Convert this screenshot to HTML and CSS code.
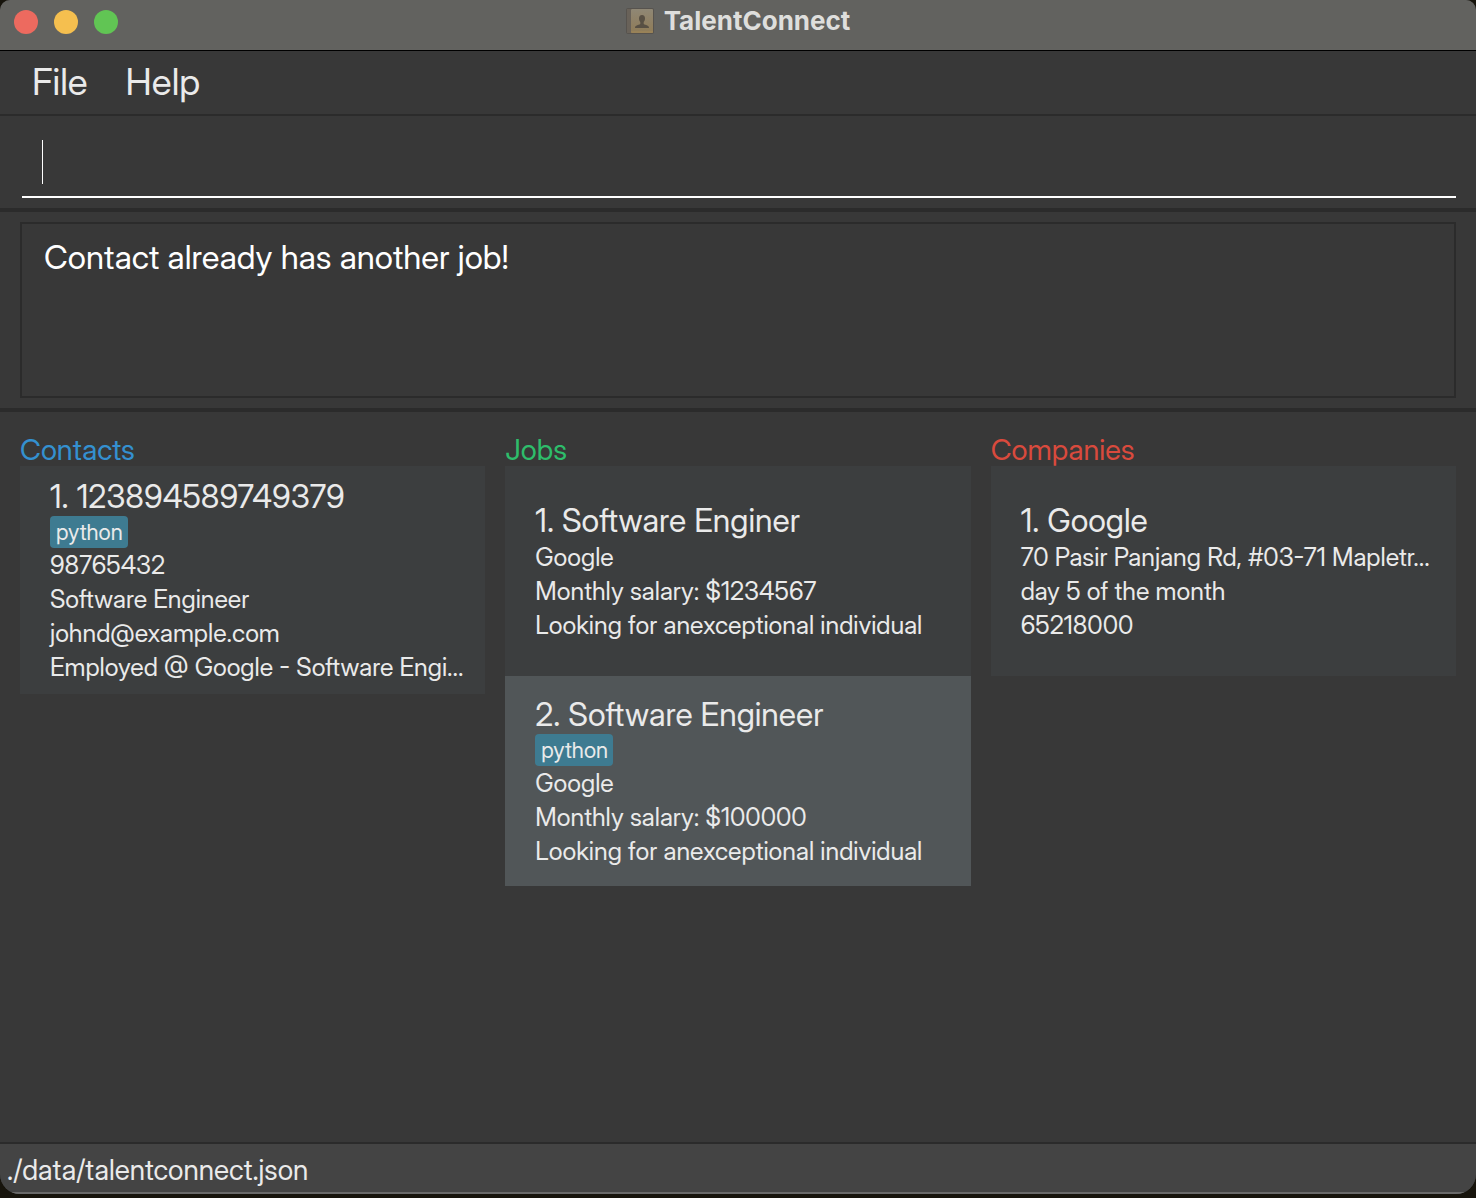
FILE: index.html
```
<!DOCTYPE html>
<html lang="en">
<head>
<meta charset="utf-8">
<title>TalentConnect</title>
<link rel="stylesheet" href="styles.css">
</head>
<body>
<div class="window">
  <header class="titlebar">
    <div class="lights">
      <button class="light close" aria-label="Close"></button>
      <button class="light minimize" aria-label="Minimize"></button>
      <button class="light maximize" aria-label="Maximize"></button>
    </div>
    <h1 class="app-name">
      <svg class="app-icon" viewBox="0 0 28 28" aria-hidden="true">
        <defs>
          <linearGradient id="cover" x1="0" y1="0" x2="0" y2="1">
            <stop offset="0" stop-color="#8f8775"/>
            <stop offset="1" stop-color="#907c57"/>
          </linearGradient>
        </defs>
        <rect x="0" y="1" width="28" height="26" rx="2" fill="#57534e"/>
        <rect x="1" y="2" width="4" height="24" fill="#696259"/>
        <rect x="5" y="2" width="22" height="24" rx="1" fill="url(#cover)"/>
        <path d="M5 25h22" stroke="#a18859" stroke-width="1"/>
        <path d="M16 8c-2 0-3 1.500-3 3.500 0 1.500.5 2.500 1.300 3.500v2c-2 1.200-5.300 1.200-5.300 4h14c0-2.800-3.300-2.800-5.300-4v-2c.8-1 1.300-2 1.300-3.500C19 9.500 18 8 16 8z" fill="#585044"/>
      </svg>
      <span>TalentConnect</span>
    </h1>
  </header>
  <nav class="menubar">
    <button class="menu">File</button>
    <button class="menu">Help</button>
  </nav>
  <form class="command">
    <input class="command-input" type="text" aria-label="Command">
  </form>
  <section class="result">
    <output class="result-text">Contact already has another job!</output>
  </section>
  <main class="lists">
    <section class="list">
      <h2 class="list-title contacts">Contacts</h2>
      <article class="card">
        <h3 class="card-title">1. 123894589749379</h3>
        <span class="tag">python</span>
        <p class="line">98765432</p>
        <p class="line">Software Engineer</p>
        <p class="line">johnd@example.com</p>
        <p class="line">Employed @ Google - Software Engi...</p>
      </article>
    </section>
    <section class="list">
      <h2 class="list-title jobs">Jobs</h2>
      <article class="card">
        <h3 class="card-title">1. Software Enginer</h3>
        <p class="line">Google</p>
        <p class="line">Monthly salary: $1234567</p>
        <p class="line">Looking for anexceptional individual</p>
      </article>
      <article class="card selected">
        <h3 class="card-title">2. Software Engineer</h3>
        <span class="tag">python</span>
        <p class="line">Google</p>
        <p class="line">Monthly salary: $100000</p>
        <p class="line">Looking for anexceptional individual</p>
      </article>
    </section>
    <section class="list">
      <h2 class="list-title companies">Companies</h2>
      <article class="card">
        <h3 class="card-title">1. Google</h3>
        <p class="line">70 Pasir Panjang Rd, #03-71 Mapletr...</p>
        <p class="line">day 5 of the month</p>
        <p class="line">65218000</p>
      </article>
    </section>
  </main>
  <footer class="status">./data/talentconnect.json</footer>
</div>
</body>
</html>
```
FILE: styles.css
```
* {
  box-sizing: border-box;
}

body {
  margin: 0;
  padding-bottom: 4px;
  min-height: 100vh;
  display: flex;
  background: #17140c;
  color: #eaeaea;
  font-family: "Inter Display", Inter, "Liberation Sans", sans-serif;
}

h1, h2, h3, p {
  margin: 0;
  font-weight: 400;
}

button {
  border: 0;
  padding: 0;
  background: none;
  color: inherit;
  font: inherit;
}

.window {
  flex: 1;
  min-width: 0;
  display: flex;
  flex-direction: column;
  overflow: hidden;
  background: #383838;
  border-radius: 10px 10px 20px 20px;
}

.titlebar {
  display: grid;
  grid-template-columns: 1fr auto 1fr;
  align-items: start;
  height: 51px;
  padding: 5px 14px 0;
  background: #62625f;
  border-bottom: 1px solid #000;
}

.lights {
  display: flex;
  gap: 16px;
  padding-top: 5px;
}

.light {
  width: 24px;
  height: 24px;
  border-radius: 50%;
}

.close { background: #ed6a5f; }
.minimize { background: #f5bf4f; }
.maximize { background: #61c554; }

.app-name {
  display: flex;
  align-items: center;
  gap: 10px;
  font-family: Inter, "Liberation Sans", sans-serif;
  font-size: 26px;
  line-height: 32px;
  font-weight: 700;
  color: #dededc;
}

.app-icon {
  width: 28px;
  height: 28px;
}

.menubar {
  display: flex;
  gap: 38px;
  padding: 8px 32px 10px;
  border-bottom: 2px solid #2b2b2b;
}

.menu {
  font-size: 37px;
  line-height: 45px;
}

.command {
  padding: 12px 20px 10px 22px;
  border-bottom: 4px solid #2b2b2b;
}

.command-input {
  display: block;
  width: 100%;
  height: 70px;
  padding: 0 20px;
  border: 0;
  border-bottom: 2px solid #fff;
  outline: 0;
  color: #fff;
  font: inherit;
  font-size: 33px;
  background: linear-gradient(#fff, #fff) 20px 12px / 1px 44px no-repeat;
}

.result {
  padding: 10px 20px;
  border-bottom: 4px solid #2b2b2b;
}

.result-text {
  display: block;
  min-height: 176px;
  padding: 12px 22px;
  border: 2px solid #2b2b2b;
  color: #fff;
  font-size: 33px;
  line-height: 42px;
}

.lists {
  flex: 1;
  display: grid;
  grid-template-columns: repeat(3, minmax(0, 1fr));
  gap: 20px;
  padding: 22px 20px 20px;
}

.list-title {
  font-size: 29px;
  line-height: 32px;
}

.contacts { color: #3490d0; }
.jobs { color: #2ebd6b; }
.companies { color: #d94a3d; }

.card {
  display: flex;
  flex-direction: column;
  justify-content: center;
  align-items: flex-start;
  min-height: 210px;
  padding: 10px 10px 10px 30px;
  background: #3c3e3f;
}

.selected {
  background: #515658;
}

.card-title {
  padding-top: 2px;
  font-size: 32px;
  line-height: 38px;
}

.tag {
  padding: 0 5px 0 6px;
  border-radius: 4px;
  background: #3e7b91;
  font-size: 22px;
  line-height: 32px;
}

.line {
  font-size: 25px;
  line-height: 34px;
  white-space: nowrap;
}

.status {
  padding: 9px 7px 5px;
  border-top: 2px solid #2b2b2b;
  border-bottom: 2px solid #6a6a6a;
  background: #444;
  font-size: 28px;
  line-height: 34px;
}
```
